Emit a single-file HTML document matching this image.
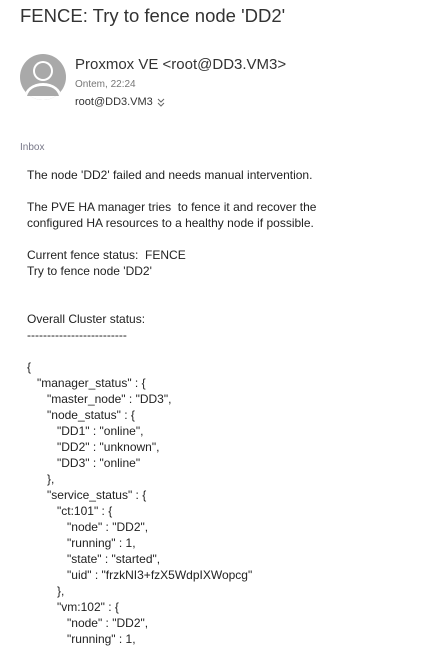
<!DOCTYPE html>
<html><head><meta charset="utf-8"><style>
body{margin:0;width:432px;height:638px;overflow:hidden;background:#fff;font-family:"Segoe UI","Liberation Sans",sans-serif;color:#222;position:relative}
.a{position:absolute;white-space:pre}
#t{left:20px;top:5px;font-size:18.5px;color:#333}
#n{left:75px;top:56px;font-size:15px;color:#333}
#d{left:75px;top:79px;font-size:10px;color:#777}
#r{left:75px;top:96px;font-size:11px;color:#333}
#i{left:20px;top:142px;font-size:10px;color:#778}
#b{left:27px;top:167px;font-size:12px;line-height:16px;color:#222}
</style></head><body>
<div class="a" id="t">FENCE: Try to fence node 'DD2'</div>
<svg class="a" style="left:20px;top:54px" width="46" height="46" viewBox="0 0 46 46">
<defs><clipPath id="c"><circle cx="23" cy="23" r="23"/></clipPath></defs>
<circle cx="23" cy="23" r="23" fill="#a9a9a9"/>
<g clip-path="url(#c)" fill="#fff"><circle cx="23" cy="17" r="10"/><ellipse cx="23" cy="44" rx="19" ry="15"/></g>
<circle cx="23" cy="17" r="8" fill="#a9a9a9"/><path d="M7 42 Q10 32 23 32 Q36 32 39 42 Z" fill="#a9a9a9"/>
</svg>
<div class="a" id="n">Proxmox VE &lt;root@DD3.VM3&gt;</div>
<div class="a" id="d">Ontem, 22:24</div>
<div class="a" id="r">root@DD3.VM3</div>
<svg class="a" style="left:157px;top:98px" width="8" height="9" viewBox="0 0 8 9"><path d="M1 1 L4 4 L7 1 M1 5 L4 8 L7 5" fill="none" stroke="#666" stroke-width="1"/></svg>
<div class="a" id="i">Inbox</div>
<div class="a" id="b">The node 'DD2' failed and needs manual intervention.

The PVE HA manager tries  to fence it and recover the
configured HA resources to a healthy node if possible.

Current fence status:  FENCE
Try to fence node 'DD2'


Overall Cluster status:
-------------------------

{
   "manager_status" : {
      "master_node" : "DD3",
      "node_status" : {
         "DD1" : "online",
         "DD2" : "unknown",
         "DD3" : "online"
      },
      "service_status" : {
         "ct:101" : {
            "node" : "DD2",
            "running" : 1,
            "state" : "started",
            "uid" : "frzkNI3+fzX5WdpIXWopcg"
         },
         "vm:102" : {
            "node" : "DD2",
            "running" : 1,</div>
</body></html>
